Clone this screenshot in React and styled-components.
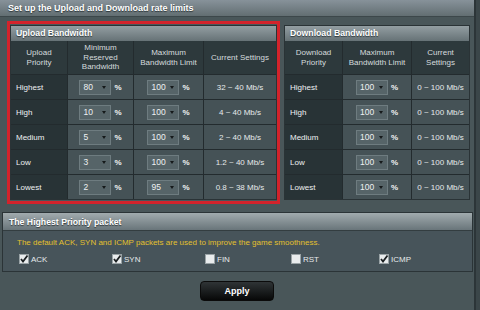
import React from "react";
import styled, { createGlobalStyle } from "styled-components";

const Global = createGlobalStyle`
  html, body { margin: 0; padding: 0; }
  body {
    background: #3b4649;
    font-family: "Liberation Sans", Arial, sans-serif;
    width: 480px; height: 310px; overflow: hidden;
  }
  * { box-sizing: border-box; }
`;

const Main = styled.div`
  width: 476px;
  height: 310px;
  background: #495659;
  border-right: 2px solid #2c3538;
  display: flex;
  flex-direction: column;
`;

const TitleBar = styled.div`
  height: 17px;
  line-height: 16px;
  padding-left: 8px;
  font-size: 9px;
  font-weight: bold;
  color: #fff;
  text-shadow: 0 1px 1px #2a3336;
  background: linear-gradient(#87929a, #626e72);
  border-bottom: 1px solid #3c474a;
`;

const Content = styled.div`
  display: flex;
  align-items: flex-start;
  gap: 4px;
  padding: 4px 0 0 7px;
`;

const RedBox = styled.div`
  border: 3px solid #d3232b;
  padding: 1px 0;
`;

const Panel = styled.div`
  margin-top: ${(p) => p.$offset || 0}px;
  background: #262f32;
  border: 1px solid #2a3336;
`;

const PanelHeader = styled.div`
  height: 15px;
  line-height: 15px;
  padding-left: 5px;
  font-size: 8.7px;
  font-weight: bold;
  color: #fff;
  text-shadow: 0 1px 1px #2f383b;
  background: linear-gradient(#939ea2, #667276);
`;

const Grid = styled.div`
  display: grid;
  grid-template-columns: ${(p) => p.$cols};
  gap: 1px;
  background: #232b2e;
`;

const HeadCell = styled.div`
  height: 33px;
  background: #2d393c;
  color: #d6dcde;
  font-size: 8px;
  line-height: 9.5px;
  text-align: center;
  display: flex;
  align-items: center;
  justify-content: center;
`;

const PrioCell = styled.div`
  height: 24px;
  background: #283336;
  color: #eef1f2;
  font-size: 8px;
  display: flex;
  align-items: center;
  padding-left: 5px;
`;

const DataCell = styled.div`
  height: 24px;
  background: #455256;
  color: #e6eaeb;
  font-size: 8px;
  display: flex;
  align-items: center;
  justify-content: center;
  gap: 3px;
`;

const SelectBox = styled.div`
  width: 32px;
  height: 15px;
  background: #566468;
  border: 1px solid #6e7c80;
  color: #eef1f2;
  font-size: 8.5px;
  display: flex;
  align-items: center;
  justify-content: space-between;
  padding: 0 4px 0 3px;
`;

const Arrow = styled.span`
  width: 0;
  height: 0;
  border-left: 2px solid transparent;
  border-right: 2px solid transparent;
  border-top: 3px solid #15191a;
`;

const Pct = styled.span`
  font-weight: bold;
  font-size: 8px;
  color: #f2f4f5;
`;

const Section = styled.div`
  margin: 8px 0 0 2px;
  width: 471px;
  border: 1px solid #2b3437;
  background: #47545a;
`;

const SectionHeader = styled.div`
  height: 18px;
  line-height: 18px;
  padding-left: 6px;
  font-size: 8.7px;
  font-weight: bold;
  color: #fff;
  text-shadow: 0 1px 1px #2f383b;
  background: linear-gradient(#a1abae, #69757a);
  border-bottom: 1px solid #333d40;
`;

const Note = styled.div`
  padding: 7px 0 0 14px;
  font-size: 8px;
  color: #e3c02e;
  height: 19px;
`;

const CheckRow = styled.div`
  display: grid;
  grid-template-columns: 93px 93px 86px 88px 90px;
  padding: 4px 0 7px 16px;
`;

const CheckItem = styled.label`
  display: flex;
  align-items: center;
  gap: 2px;
  font-size: 8px;
  color: #e6eaeb;
`;

const ButtonRow = styled.div`
  display: flex;
  justify-content: center;
  padding-top: 9px;
`;

const ApplyButton = styled.button`
  width: 74px;
  height: 20px;
  border: 1px solid #0b0b0b;
  border-radius: 4px;
  background: linear-gradient(#2f3436, #070808);
  color: #fff;
  font-family: inherit;
  font-size: 9px;
  font-weight: bold;
  padding: 0;
`;

const Check = ({ checked }) => (
  <svg width="10" height="10" viewBox="0 0 10 10">
    <rect x="0.5" y="0.5" width="9" height="9" fill="#e9eced" stroke="#9aa3a6" />
    {checked && (
      <path d="M2 5 L4 7.5 L8.5 1.5" fill="none" stroke="#1b2022" strokeWidth="1.8" />
    )}
  </svg>
);

const Sel = ({ v }) => (
  <>
    <SelectBox>
      <span>{v}</span>
      <Arrow />
    </SelectBox>
    <Pct>%</Pct>
  </>
);

const upload = [
  ["Highest", "80", "100", "32 ~ 40 Mb/s"],
  ["High", "10", "100", "4 ~ 40 Mb/s"],
  ["Medium", "5", "100", "2 ~ 40 Mb/s"],
  ["Low", "3", "100", "1.2 ~ 40 Mb/s"],
  ["Lowest", "2", "95", "0.8 ~ 38 Mb/s"],
];

const download = ["Highest", "High", "Medium", "Low", "Lowest"];

const checks = [
  ["ACK", true],
  ["SYN", true],
  ["FIN", false],
  ["RST", false],
  ["ICMP", true],
];

export default function App() {
  return (
    <>
      <Global />
      <Main>
        <TitleBar>Set up the Upload and Download rate limits</TitleBar>
        <Content>
          <RedBox>
            <Panel>
              <PanelHeader>Upload Bandwidth</PanelHeader>
              <Grid $cols="56px 65px 69px 72px">
                <HeadCell>Upload<br />Priority</HeadCell>
                <HeadCell>Minimum<br />Reserved<br />Bandwidth</HeadCell>
                <HeadCell>Maximum<br />Bandwidth Limit</HeadCell>
                <HeadCell>Current Settings</HeadCell>
                {upload.map(([p, min, max, cur]) => (
                  <React.Fragment key={p}>
                    <PrioCell>{p}</PrioCell>
                    <DataCell><Sel v={min} /></DataCell>
                    <DataCell><Sel v={max} /></DataCell>
                    <DataCell>{cur}</DataCell>
                  </React.Fragment>
                ))}
              </Grid>
            </Panel>
          </RedBox>
          <Panel $offset={4}>
            <PanelHeader>Download Bandwidth</PanelHeader>
            <Grid $cols="57px 68px 57px">
              <HeadCell>Download<br />Priority</HeadCell>
              <HeadCell>Maximum<br />Bandwidth Limit</HeadCell>
              <HeadCell>Current<br />Settings</HeadCell>
              {download.map((p) => (
                <React.Fragment key={p}>
                  <PrioCell>{p}</PrioCell>
                  <DataCell><Sel v="100" /></DataCell>
                  <DataCell>0 ~ 100 Mb/s</DataCell>
                </React.Fragment>
              ))}
            </Grid>
          </Panel>
        </Content>
        <Section>
          <SectionHeader>The Highest Priority packet</SectionHeader>
          <Note>The default ACK, SYN and ICMP packets are used to improve the game smoothness.</Note>
          <CheckRow>
            {checks.map(([l, c]) => (
              <CheckItem key={l}>
                <Check checked={c} />
                {l}
              </CheckItem>
            ))}
          </CheckRow>
        </Section>
        <ButtonRow>
          <ApplyButton>Apply</ApplyButton>
        </ButtonRow>
      </Main>
    </>
  );
}
